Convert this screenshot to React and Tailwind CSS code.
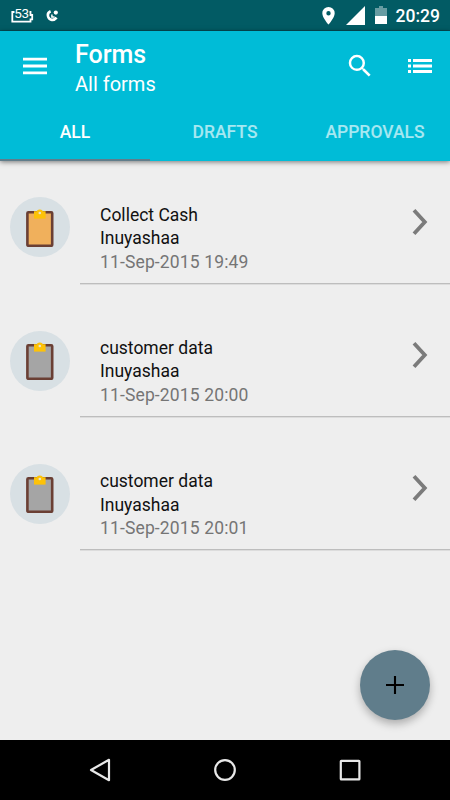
import { useState } from "react";
import clsx from "clsx";

const TABS = ["ALL", "DRAFTS", "APPROVALS"];

const FORMS = [
  { title: "Collect Cash", owner: "Inuyashaa", date: "11-Sep-2015 19:49", color: "#f0b05c" },
  { title: "customer data", owner: "Inuyashaa", date: "11-Sep-2015 20:00", color: "#a5a5a5" },
  { title: "customer data", owner: "Inuyashaa", date: "11-Sep-2015 20:01", color: "#a5a5a5" },
];

const StatusBar = () => {
  return (
    <div className="flex h-[31px] shrink-0 items-center border-b border-[#034e57] bg-[#025b64] text-white">
      <div className="relative ml-[11px] flex h-[17px] w-[23px] items-center justify-center">
        <svg className="absolute inset-0" width="23" height="17" viewBox="0 0 23 17" fill="none">
          <path d="M3.5 5H1.3V14.6H19.5V12.3H21.2V8H19.5V5H18.5" stroke="#fff" strokeWidth="1.8" />
        </svg>
        <span className="relative -ml-[2px] -mt-[2px] text-[13.5px] leading-none tracking-[-0.3px]">53</span>
      </div>
      <svg className="ml-[12px] mt-px" width="14" height="14" viewBox="0 0 14 14" fill="none">
        <path d="M4.6 2.2C2 3.4 1.4 5.6 2.3 8C3.6 11.2 7.6 12.2 10.6 8.6" stroke="#fff" strokeWidth="2.6" />
        <circle cx="9.8" cy="3.6" r="2.1" fill="#fff" />
        <path d="M5.9 5.4V8.1H8.6" stroke="#fff" strokeWidth="1.5" />
      </svg>
      <div className="ml-auto flex items-center">
        <svg className="mt-px" width="13" height="18" viewBox="0 0 13 18" fill="#fff">
          <path
            fillRule="evenodd"
            d="M6.5 0A6.2 6.2 0 0 0 .3 6.2C.3 10.8 6.5 17.5 6.5 17.5S12.7 10.8 12.7 6.2A6.2 6.2 0 0 0 6.5 0ZM6.5 8.4A2.2 2.2 0 1 1 6.5 4A2.2 2.2 0 0 1 6.5 8.4Z"
          />
        </svg>
        <svg className="ml-[11px]" width="19" height="19" viewBox="0 0 19 19" fill="#fff">
          <path d="M0 19H19V0Z" />
        </svg>
        <svg className="ml-[10px]" width="12" height="18" viewBox="0 0 12 18">
          <path d="M4 0H8V2H12V10H0V2H4Z" fill="#fff" fillOpacity=".4" />
          <path d="M0 10H12V18H0Z" fill="#fff" />
        </svg>
        <span className="ml-[9px] mr-[10px] mt-[3px] text-[17.5px] font-medium leading-none">20:29</span>
      </div>
    </div>
  );
};

const Clipboard = ({ color }) => {
  return (
    <svg width="28" height="39" viewBox="0 0 28 39">
      <rect x="1.4" y="4.2" width="24.8" height="33.6" rx="1" fill={color} stroke="#6a3f34" strokeWidth="2.6" />
      <path d="M8 3.2H19.6V10.6H8Z" fill="#fdc208" />
      <circle cx="13.8" cy="4.6" r="3.2" fill="#fdc208" />
      <circle cx="13.8" cy="5" r="1.3" fill="#e9e3cf" />
    </svg>
  );
};

const FormRow = ({ form }) => {
  return (
    <li className="flex h-[96px] pl-[10px]">
      <div className="mt-[9.4px] flex size-[60px] shrink-0 items-center justify-center rounded-full bg-[#d8e0e4]">
        <Clipboard color={form.color} />
      </div>
      <div className="ml-[10px] flex flex-1 border-b border-[#bdbdbd] pl-5 pt-[15.6px] shadow-[0_1px_0_#dcdcdc]">
        <div className="flex-1 text-[17.5px] leading-[23.7px] text-[#111]">
          <p>{form.title}</p>
          <p>{form.owner}</p>
          <p className="tracking-[0.14px] text-[#757575]">{form.date}</p>
        </div>
        <svg className="mr-[22px] mt-[4.4px]" width="16" height="28" viewBox="0 0 16 28" fill="none">
          <path d="M2 2.2L12.8 14L2 25.8" stroke="#7b7b7b" strokeWidth="3.8" />
        </svg>
      </div>
    </li>
  );
};

const App = () => {
  const [tab, setTab] = useState("ALL");

  return (
    <div className="relative flex h-[800px] w-[450px] flex-col overflow-hidden bg-[#eeeeee] font-[Roboto,sans-serif]">
      <StatusBar />
      <header className="flex h-[130px] shrink-0 flex-col bg-[#00bcd7] text-white shadow-[0_1px_5px_rgba(0,0,0,0.5)]">
        <div className="flex h-[70px] items-center">
          <svg className="ml-[23px]" width="24" height="18" viewBox="0 0 24 18" fill="#fff">
            <path d="M0 0.7H24V3.5H0ZM0 7.6H24V10.4H0ZM0 14.5H24V17.3H0Z" />
          </svg>
          <div className="ml-[28px] flex-1 pt-[6px]">
            <h1 className="text-[25px] font-medium leading-[30px]">Forms</h1>
            <p className="text-[20px] leading-[28px]">All forms</p>
          </div>
          <button aria-label="Search">
            <svg width="30" height="30" viewBox="0 0 24 24" fill="#fff">
              <path d="M15.5 14h-.79l-.28-.27A6.47 6.47 0 0 0 16 9.5 6.5 6.5 0 1 0 9.5 16c1.61 0 3.09-.59 4.23-1.57l.27.28v.79l5 4.99L20.49 19l-4.99-5zm-6 0C7.01 14 5 11.99 5 9.5S7.01 5 9.5 5 14 7.01 14 9.5 11.99 14 9.5 14z" />
            </svg>
          </button>
          <button aria-label="List options" className="ml-[33px] mr-[18px]">
            <svg width="24" height="14" viewBox="0 0 24 14" fill="#fff">
              <path d="M0 0H3V3H0ZM5 0H24V3H5ZM0 5.5H3V8.5H0ZM5 5.5H24V8.5H5ZM0 11H3V14H0ZM5 11H24V14H5Z" />
            </svg>
          </button>
        </div>
        <nav className="grid flex-1 grid-cols-3">
          {TABS.map((name) => (
            <button
              key={name}
              onClick={() => setTab(name)}
              className={clsx(
                "border-b-2 pt-[4px] text-[17.5px] font-medium",
                tab === name ? "border-[#607d8b] text-white" : "border-transparent text-white/65"
              )}
            >
              {name}
            </button>
          ))}
        </nav>
      </header>
      <main className="flex-1 pt-[27px]">
        <ul className="flex flex-col gap-[37.2px]">
          {FORMS.map((form) => (
            <FormRow key={form.date} form={form} />
          ))}
        </ul>
      </main>
      <button
        aria-label="New form"
        className="absolute bottom-[80px] right-[20px] flex size-[70px] items-center justify-center rounded-full bg-[#607d8b] shadow-[0_4px_9px_rgba(0,0,0,0.28)]"
      >
        <svg width="18" height="18" viewBox="0 0 18 18" stroke="#000" strokeWidth="2.1">
          <path d="M9 0V18M0 9H18" />
        </svg>
      </button>
      <footer className="flex h-[60px] shrink-0 items-center bg-black">
        <svg className="ml-[89px]" width="22" height="24" viewBox="0 0 22 24" fill="none">
          <path d="M2 12L20 1.8V22.2Z" stroke="#e8e8e8" strokeWidth="2.2" strokeLinejoin="round" />
        </svg>
        <svg className="ml-[103px]" width="22" height="22" viewBox="0 0 22 22" fill="none">
          <circle cx="11" cy="11" r="9.8" stroke="#e8e8e8" strokeWidth="2.2" />
        </svg>
        <svg className="ml-[103px]" width="22" height="22" viewBox="0 0 22 22" fill="none">
          <rect x="1.8" y="1.8" width="18.6" height="18.6" rx="0.5" stroke="#e8e8e8" strokeWidth="2.2" />
        </svg>
      </footer>
    </div>
  );
};

export default App;
